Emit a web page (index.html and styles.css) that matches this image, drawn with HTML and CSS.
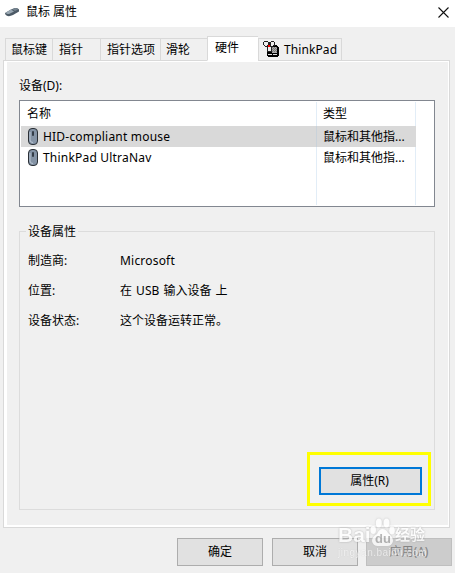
FILE: index.html
```html
<!DOCTYPE html>
<html lang="zh-CN">
<head>
    <meta charset="UTF-8">
    <meta name="viewport" content="width=device-width, initial-scale=1.0">
    <title>鼠标 属性</title>
    <link rel="stylesheet" href="styles.css">
</head>
<body>
    <div class="dialog">
        <div class="titlebar">
            <svg class="title-icon" width="15" height="10" viewBox="0 0 15 10">
                <path d="M0 6 L6 2.500 L10 1 Q13 0.500 14 2.500 V4.500 L8 8 Q4 10 1.500 8.500 Q0 7.500 0 6Z" fill="#4c5a66"/>
                <path d="M1 5.500 L6 2.500 L9 4.500 L4 7 Q1 7.500 1 5.500Z" fill="#9aa8b3"/>
                <path d="M7 2.200 L10 1 Q13 0.800 13 2.500 L10 4Z" fill="#74838f"/>
            </svg>
            <span class="title">鼠标 属性</span>
            <svg class="close" width="11" height="11" viewBox="0 0 11 11">
                <path d="M.5 .5 L10.500 10.500 M10.500 .5 L.5 10.500" stroke="#111" stroke-width="1.100"/>
            </svg>
        </div>

        <div class="tabs">
            <div class="tab tab-keys">鼠标键</div>
            <div class="tab tab-pointer">指针</div>
            <div class="tab tab-options">指针选项</div>
            <div class="tab tab-wheel">滑轮</div>
            <div class="tab active">硬件</div>
            <div class="tab tab-thinkpad">
                <svg width="16" height="16" viewBox="0 0 16 16" shape-rendering="crispEdges">
                    <path d="M7 4h7v1h1v1h1v9h-1v1H5v-1H4v-4h3z" fill="#000"/>
                    <path d="M9 6h5v6H9z" fill="#aaa"/>
                    <path d="M9 6h1v1H9zM11 6h1v1h-1zM13 6h1v1h-1zM10 7h1v1h-1zM12 7h1v1h-1zM9 8h1v1H9zM11 8h1v1h-1zM13 8h1v1h-1zM10 9h1v1h-1zM12 9h1v1h-1zM9 10h1v1H9zM11 10h1v1h-1zM13 10h1v1h-1z" fill="#777"/>
                    <path d="M1 0h4v1h3V0h3v1h1v4h-2v1H9v5H4V6H2V5H1V4H0V1h1z" fill="#222"/>
                    <path d="M1 1h4v3H4v1H2V4H1zM8 1h3v3h-1v1H8zM5 6h3v4H5z" fill="#eee"/>
                    <path d="M5 13h4v1H5zM10 13h4v1h-4z" fill="#ddd"/>
                    <path d="M5 4h2v2H5z" fill="#f00"/>
                </svg>
                <span class="latin">ThinkPad</span>
            </div>
        </div>

        <div class="panel">
            <div class="list-label">设备(D):</div>
            <div class="device-list">
                <div class="row header">
                    <div class="name">名称</div>
                    <div class="type">类型</div>
                </div>
                <div class="row selected">
                    <div class="name">
                        <svg class="mouse" width="10" height="17" viewBox="0 0 10 17">
                            <rect x=".5" y=".5" width="9" height="16" rx="3.500" fill="#8493a5" stroke="#2b3036"/>
                            <path d="M2 4 V12 Q2 14.500 5 14.500" fill="none" stroke="#b9c5d2"/>
                            <rect x="4" y="3" width="2" height="5" rx="1" fill="#333c47"/>
                        </svg>
                        <span class="latin">HID-compliant mouse</span>
                    </div>
                    <div class="type">鼠标和其他指...</div>
                </div>
                <div class="row">
                    <div class="name">
                        <svg class="mouse" width="10" height="17" viewBox="0 0 10 17">
                            <rect x=".5" y=".5" width="9" height="16" rx="3.500" fill="#8493a5" stroke="#2b3036"/>
                            <path d="M2 4 V12 Q2 14.500 5 14.500" fill="none" stroke="#b9c5d2"/>
                            <rect x="4" y="3" width="2" height="5" rx="1" fill="#333c47"/>
                        </svg>
                        <span class="latin">ThinkPad UltraNav</span>
                    </div>
                    <div class="type">鼠标和其他指...</div>
                </div>
                <div class="row empty">
                    <div class="name"></div>
                    <div class="type"></div>
                </div>
            </div>

            <div class="group">
                <div class="legend">设备属性</div>
                <dl class="details">
                    <dt>制造商:</dt>
                    <dd class="latin">Microsoft</dd>
                    <dt>位置:</dt>
                    <dd class="location">在 USB 输入设备 上</dd>
                    <dt>设备状态:</dt>
                    <dd>这个设备运转正常。</dd>
                </dl>
                <div class="highlight">
                    <button class="btn-props">属性(R)</button>
                </div>
            </div>
        </div>

        <div class="footer">
            <button class="btn-ok">确定</button>
            <button>取消</button>
            <button disabled>应用(A)</button>
        </div>

        <div class="watermark">
            <div class="brand">
                <span class="brand-bai">Bai</span>
                <svg width="25" height="29" viewBox="0 0 25 29">
                    <ellipse cx="3.200" cy="12" rx="2.800" ry="4"/>
                    <ellipse cx="8.800" cy="5" rx="3" ry="4.500"/>
                    <ellipse cx="16.500" cy="5" rx="3" ry="4.500"/>
                    <ellipse cx="22" cy="12.500" rx="2.800" ry="4"/>
                    <path d="M12.500 11 Q16 11 18 15 Q23 19 23 23 Q22 28 17 28 H8 Q3 28 2 23 Q2 19 7 16 Q9 11 12.500 11Z"/>
                    <text x="5" y="25">du</text>
                </svg>
                <span class="brand-cn">经验</span>
            </div>
            <div class="url">jingyan.baidu.com</div>
        </div>
    </div>
</body>
</html>
```
FILE: styles.css
```css
* {
    box-sizing: border-box;
}

body {
    margin: 0;
    background-color: #f0f0f0;
    color: #000;
    font-family: "Noto Sans", "Noto Sans CJK SC", sans-serif;
    font-size: 12px;
    line-height: 16px;
}

.dialog {
    position: relative;
    display: flex;
    flex-direction: column;
    width: 455px;
    height: 573px;
    overflow: hidden;
}

.latin {
    letter-spacing: 0.2px;
}

.titlebar {
    display: flex;
    align-items: center;
    height: 27px;
    padding: 0 6px 3px 5px;
    background: #fff;
}

.title {
    flex: 1;
    margin-left: 6px;
}

.tabs {
    display: flex;
    align-items: flex-end;
    height: 34px;
    padding-left: 5px;
    position: relative;
    z-index: 1;
}

.tab {
    height: 23px;
    padding: 3px 0 0 6px;
    border: 1px solid #d9d9d9;
    border-right: none;
}

.tab-keys {
    width: 47px;
    padding-left: 5px;
}

.tab-pointer {
    width: 48px;
}

.tab-options {
    width: 60px;
    padding-left: 6px;
}

.tab-wheel {
    width: 47px;
    padding-left: 5px;
}

.active {
    width: 51px;
    height: 25px;
    padding-left: 7px;
    background: #fff;
    border-bottom-color: #fff;
}

.tab-thinkpad {
    display: flex;
    gap: 5px;
    width: 84px;
    padding: 2px 0 0 4px;
    border-right: 1px solid #d9d9d9;
}

.tab-thinkpad span {
    padding-top: 1px;
    letter-spacing: 0.1px;
}

.panel {
    width: 447px;
    height: 468px;
    margin: -1px 0 0 3px;
    padding: 17px 13px 0 12px;
    border: 1px solid #d9d9d9;
    box-shadow: inset 3px 0 #fff, inset -1px 0 #fff, inset 0 1px #fff, inset 0 -2px #fff;
}

.panel > * {
    margin-left: 3px;
}

.device-list {
    width: 416px;
    height: 107px;
    margin-top: 6px;
    padding: 1px;
    background: #fff;
    border: 1px solid #828790;
}

.row {
    display: flex;
    width: 395px;
    height: 21px;
}

.header {
    height: 24px;
}

.empty {
    height: 37px;
}

.selected {
    background: #d9d9d9;
}

.name {
    display: flex;
    align-items: center;
    gap: 5px;
    width: 296px;
    padding-left: 7px;
    border-right: 1px solid #e2edf7;
}

.header .name {
    padding-left: 6px;
}

.selected .name {
    border-right-color: #c9d2da;
}

.type {
    flex: 1;
    padding: 3px 0 0 6px;
    border-right: 1px solid #e2edf7;
}

.header .type {
    padding-top: 4px;
}

.selected .type {
    border-right-color: #d9d9d9;
}

.group {
    display: flex;
    flex-direction: column;
    width: 416px;
    height: 279px;
    margin-top: 24px;
    border: 1px solid #dcdcdc;
}

.legend {
    align-self: flex-start;
    margin: -8px 0 0 6px;
    padding: 0 2px;
    background: #f0f0f0;
}

.details {
    display: grid;
    grid-template-columns: 92px 1fr;
    row-gap: 14px;
    margin: 13px 0 0 8px;
}

.details dd {
    margin: 0;
}

.details .location {
    word-spacing: 1px;
}

button {
    width: 86px;
    height: 28px;
    padding: 0;
    background: #e1e1e1;
    border: 1px solid #adadad;
    color: #000;
    font: inherit;
}

button:disabled {
    background: #ccc;
    border-color: #bfbfbf;
    color: #838383;
}

.highlight {
    align-self: flex-end;
    width: 124px;
    height: 54px;
    margin: auto 3px 3px 0;
    padding: 12px 0 0 9px;
    border: 3px solid #ff0;
}

.btn-props {
    width: 103px;
    padding-right: 2px;
    border: 2px solid #0078d7;
}

.footer {
    display: flex;
    justify-content: flex-end;
    gap: 8px;
    padding: 10px 3px 0 0;
}

.btn-ok {
    margin-right: 1px;
}

/* translucent logo over the buttons */
.watermark {
    position: absolute;
    left: 338px;
    top: 518px;
    color: #fff;
    font-family: "Liberation Sans", "Noto Sans CJK SC", sans-serif;
}

.brand {
    display: flex;
    align-items: flex-end;
    height: 29px;
    font-weight: bold;
    line-height: 24px;
    opacity: 0.8;
    text-shadow: 0 0 2px #999;
}

.brand-bai {
    width: 32px;
    font-size: 21px;
}

.brand svg {
    fill: #fff;
    filter: drop-shadow(0 0 1px #bbb);
}

.brand svg text {
    fill: #aaa;
    font-size: 13px;
    text-shadow: none;
}

.brand-cn {
    font-size: 15px;
}

.url {
    font-size: 10px;
    line-height: 12px;
    letter-spacing: 0.5px;
    opacity: 0.6;
    text-shadow: 0 0 1px #aaa;
}
```
